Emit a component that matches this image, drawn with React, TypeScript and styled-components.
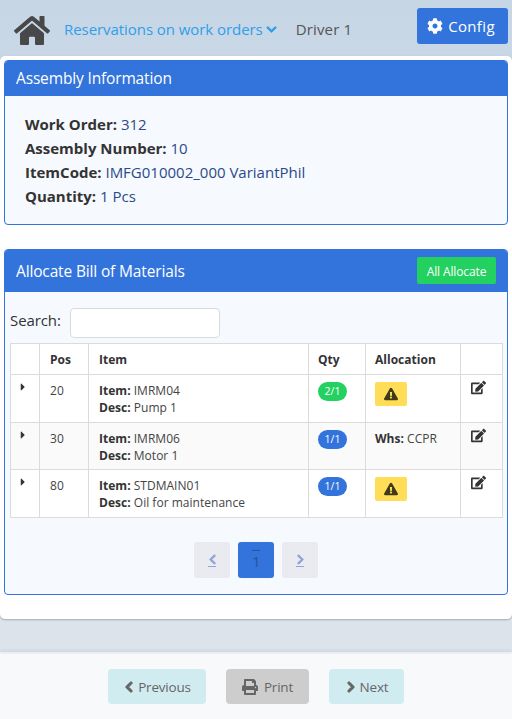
import React from "react";
import styled, { createGlobalStyle } from "styled-components";
import { FaHome, FaCog, FaChevronDown, FaPrint, FaChevronLeft, FaChevronRight, FaEdit, FaExclamationTriangle, FaCaretRight } from "react-icons/fa";

const Global = createGlobalStyle`
  * { box-sizing: border-box; }
  html, body { margin: 0; padding: 0; height: 719px; overflow: hidden; }
  body { font-family: "Open Sans", "Noto Sans", sans-serif; color: #343a40; font-size: 15px; }
`;

const Page = styled.div`
  width: 512px; height: 719px; display: flex; flex-direction: column;
  background: linear-gradient(180deg, #c7d6e5 0%, #dfe5ec 100%);
`;
const Header = styled.header`
  height: 56px; display: flex; align-items: flex-start; padding: 8px 4px 0 14px;
`;
const HomeLink = styled.div`
  width: 36px; height: 40px; display: flex; align-items: center; justify-content: center; color: #484848; margin-right: 14px; margin-top: 2px;
`;
const HomeIcon = styled(FaHome)`
  width: 36px; height: 33px; flex: none;
`;
const NavLink = styled.div`
  display: flex; align-items: center; height: 40px; margin-top: 1px; color: #2e9fea; font-size: 15px; letter-spacing: -0.06px; gap: 3px; white-space: nowrap;
`;
const BoldDown = styled(FaChevronDown)`
  width: 11px; height: 11px; stroke: currentColor; stroke-width: 40px;
`;
const Driver = styled.div`
  display: flex; align-items: center; height: 40px; margin-top: 1px; margin-left: 19px; color: #555; font-size: 15px; letter-spacing: 0.15px; white-space: nowrap;
`;
const ConfigButton = styled.button`
  margin-left: auto; width: 91px; height: 36px; border: 0; border-radius: 3px; background: #3273dc; color: #fff; font: inherit; font-size: 15px; letter-spacing: 0.35px;
  display: flex; align-items: center; justify-content: center; gap: 5px; padding: 0 3px 0 0;
`;
const Main = styled.main`
  background: #fff; border-radius: 5px; padding: 4px 4px 24px; height: 563px; box-shadow: 0 1px 2px rgba(0,0,0,.25);
`;
const Card = styled.section<{ $gap?: boolean }>`
  border: 1px solid #3273dc; border-radius: 4px; background: #f6f9fe; margin-top: ${p => (p.$gap ? 24 : 0)}px; overflow: hidden;
`;
const CardHead = styled.div<{ $h: number }>`
  height: ${p => p.$h}px; margin: -1px -1px 0; background: #3273dc; color: #fff; display: flex; align-items: center; justify-content: space-between; padding: 0 12px; font-size: 15.5px; letter-spacing: -0.15px;
`;
const AllocateBtn = styled.button`
  width: 79px; height: 27px; border: 0; border-radius: 2px; background: #23d160; color: #fff; font: inherit; font-size: 12px; letter-spacing: -0.12px; padding: 1px 0 0;
`;
const InfoBody = styled.div`
  height: 128px; padding: 16px 20px; line-height: 24px; font-size: 15px; letter-spacing: 0; color: #2b4a8b;
`;
const Line = styled.div``;
const Label = styled.b`
  color: #333; font-weight: 700;
`;
const TableBody = styled.div`
  height: 302px; padding: 16px 5px 0 5px;
`;
const SearchRow = styled.label`
  display: flex; align-items: flex-start; height: 31px; gap: 9px; font-size: 15px; letter-spacing: -0.1px; line-height: 24px; color: #333; margin-bottom: 4px;
`;
const SearchInput = styled.input`
  width: 150px; height: 30px; border: 1px solid #dbdbdb; border-radius: 4px; background: #fff;
`;
const Table = styled.table`
  width: 492px; border-collapse: collapse; table-layout: fixed; font-size: 12px; color: #444; letter-spacing: 0.02px; background: #fff;
`;
const Th = styled.th<{ $w: number; $tight?: boolean }>`
  width: ${p => p.$w}px; height: 31px; border: 1px solid #dbdbdb; text-align: left; padding: 0 10px 0 ${p => (p.$tight ? 9 : 10)}px; color: #333; font-weight: 700;
`;
const Tr = styled.tr<{ $h: number; $alt?: boolean }>`
  height: ${p => p.$h}px; background: ${p => (p.$alt ? "#fafafa" : "#fff")};
`;
const Td = styled.td<{ $tight?: boolean }>`
  border: 1px solid #dbdbdb; padding: 7px 10px 0 ${p => (p.$tight ? 9 : 10)}px; vertical-align: top; line-height: 17px;
`;
const CaretCell = styled(Td)`
  padding: 5px 0 0 6px; color: #333; font-size: 12px;
`;
const EditCell = styled(Td)`
  padding: 5px 0 0 10px; color: #333; font-size: 15px;
`;
const Pill = styled.span<{ $c: string }>`
  display: inline-flex; align-items: center; justify-content: center; width: 29px; height: 19px; border-radius: 10px; background: ${p => p.$c}; color: #fff; font-size: 10.5px;
`;
const Warn = styled.span`
  display: flex; align-items: center; justify-content: center; width: 32px; height: 24px; border-radius: 2px; background: #ffdd57; color: #40391a; font-size: 14px;
`;
const Pager = styled.nav`
  display: flex; justify-content: center; gap: 8px; margin-top: 24px;
`;
const PageBtn = styled.div<{ $active?: boolean }>`
  width: 36px; height: 36px; border-radius: 3px; background: ${p => (p.$active ? "#3273dc" : "#e9ebf0")}; color: ${p => (p.$active ? "#2b5392" : "#8ea5d6")};
  display: flex; align-items: center; justify-content: center;
  svg { stroke: currentColor; stroke-width: 40px; }
`;
const PageInner = styled.span`
  display: flex; flex-direction: column; align-items: center; border-bottom: 1px solid currentColor; padding-bottom: 1px; width: 8px;
`;
const PageNum = styled.span`
  display: block; width: 8px; border-top: 1px solid currentColor; line-height: 20px; font-size: 15px; text-align: center;
`;
const Footer = styled.footer`
  margin-top: 33px; flex: 1; background: #f8f9fb; border-top: 2px solid #eceef2; display: flex; justify-content: center; gap: 20px; padding-top: 15px;
  box-shadow: 0 -2px 3px rgba(0,0,0,.06);
`;
const FootBtn = styled.button<{ $w: number; $gray?: boolean }>`
  width: ${p => p.$w}px; height: 35px; border: 0; border-radius: 4px; padding: 0; background: ${p => (p.$gray ? "#cdcdcd" : "#d1ecf1")}; color: #666; font: inherit; font-size: 13.5px; letter-spacing: -0.2px;
  display: flex; align-items: center; justify-content: center; gap: ${p => (p.$gray ? 6 : 3)}px;
  svg { stroke: currentColor; stroke-width: ${p => (p.$gray ? 0 : 50)}px; }
`;

const rows = [
  { pos: 20, item: "IMRM04", desc: "Pump 1", qty: "2/1", color: "#23d160", h: 48, whs: false },
  { pos: 30, item: "IMRM06", desc: "Motor 1", qty: "1/1", color: "#3273dc", h: 47, whs: true },
  { pos: 80, item: "STDMAIN01", desc: "Oil for maintenance", qty: "1/1", color: "#3273dc", h: 48, whs: false },
];

export default function App() {
  return (
    <Page>
      <Global />
      <Header>
        <HomeLink><HomeIcon preserveAspectRatio="none" /></HomeLink>
        <NavLink>Reservations on work orders<BoldDown /></NavLink>
        <Driver>Driver 1</Driver>
        <ConfigButton><FaCog size={16} />Config</ConfigButton>
      </Header>
      <Main>
        <Card>
          <CardHead $h={36}>Assembly Information</CardHead>
          <InfoBody>
            <Line><Label>Work Order:</Label> 312</Line>
            <Line><Label>Assembly Number:</Label> 10</Line>
            <Line><Label>ItemCode:</Label> IMFG010002_000 VariantPhil</Line>
            <Line><Label>Quantity:</Label> 1 Pcs</Line>
          </InfoBody>
        </Card>
        <Card $gap>
          <CardHead $h={43}>Allocate Bill of Materials<AllocateBtn>All Allocate</AllocateBtn></CardHead>
          <TableBody>
            <SearchRow>Search:<SearchInput /></SearchRow>
            <Table>
              <thead>
                <tr>
                  <Th $w={29} /><Th $w={49}>Pos</Th><Th $w={220}>Item</Th><Th $w={57} $tight>Qty</Th><Th $w={95} $tight>Allocation</Th><Th $w={42} />
                </tr>
              </thead>
              <tbody>
                {rows.map((r, i) => (
                  <Tr key={r.pos} $h={r.h} $alt={i === 1}>
                    <CaretCell><FaCaretRight /></CaretCell>
                    <Td>{r.pos}</Td>
                    <Td><Label>Item:</Label> {r.item}<br /><Label>Desc:</Label> {r.desc}</Td>
                    <Td $tight><Pill $c={r.color}>{r.qty}</Pill></Td>
                    <Td $tight>{r.whs ? <><Label>Whs:</Label> CCPR</> : <Warn><FaExclamationTriangle /></Warn>}</Td>
                    <EditCell><FaEdit /></EditCell>
                  </Tr>
                ))}
              </tbody>
            </Table>
            <Pager>
              <PageBtn><PageInner><FaChevronLeft size={11} /></PageInner></PageBtn>
              <PageBtn $active><PageNum>1</PageNum></PageBtn>
              <PageBtn><PageInner><FaChevronRight size={11} /></PageInner></PageBtn>
            </Pager>
          </TableBody>
        </Card>
      </Main>
      <Footer>
        <FootBtn $w={98}><FaChevronLeft size={12} />Previous</FootBtn>
        <FootBtn $w={83} $gray><FaPrint size={16} />Print</FootBtn>
        <FootBtn $w={75}><FaChevronRight size={12} />Next</FootBtn>
      </Footer>
    </Page>
  );
}
